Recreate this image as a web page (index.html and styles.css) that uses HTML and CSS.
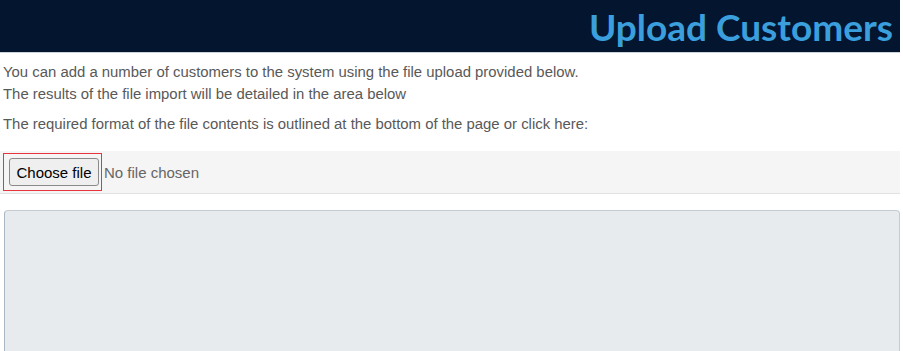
FILE: index.html
```
<!DOCTYPE html>

<html>
	<head>
		<meta charset="utf-8">
		<title>Upload Customers</title>
		<link rel="stylesheet" href="styles.css">
	</head>

	<body>
		<div class = "header">
			<h1>Upload Customers</h1>
		</div>

		<div class = "intro">
			<p>You can add a number of customers to the system using the file upload provided below.<br>
			The results of the file import will be detailed in the area below</p>
			<p class = "format">The required format of the file contents is outlined at the bottom of the page or click here:</p>
		</div>

		<!--File picker-->
		<div class = "uploadBar">
			<label class = "picker">
				<input type = "file" class = "fileInput">
				<span class = "chooseButton">Choose file</span>
			</label>
			<span class = "fileName">No file chosen</span>
		</div>

		<!--Import results-->
		<div class = "results">
			<textarea class = "resultText" readonly></textarea>
		</div>
	</body>
</html>
```

FILE: styles.css
```
html {
	overflow: hidden;
}

body {
	margin: 0 3px 0 0;
	font-family: 'Liberation Sans', Arial, sans-serif;
	background-color: #ffffff;
}

/*Header*/
.header {
	height: 52px;
	background-color: #03152f;
	border-bottom: 1px solid #cdd2d8;
	display: flex;
	align-items: center;
	justify-content: flex-end;
	padding-right: 7px;
}

.header h1 {
	margin: 0;
	font-family: 'Lato', sans-serif;
	font-weight: 700;
	font-size: 37px;
	color: #3a9fdc;
}

/*Text at top*/
.intro {
	padding: 0 3px;
	color: #595959;
	font-size: 14.9px;
	line-height: 22px;
}

.intro p {
	margin: 8px 0 0 0;
}

.intro .format {
	margin-bottom: 16px;
}

/*Upload bar*/
.uploadBar {
	display: flex;
	align-items: center;
	height: 40px;
	padding: 1px 3px 1px 3px;
	background-color: #f5f5f5;
	border-bottom: 1px solid #e2e2e2;
}

.picker {
	display: block;
	border: 1px solid #e8343c;
	padding: 4px 2px 4px 5px;
}

.fileInput {
	display: none;
}

.chooseButton {
	display: flex;
	align-items: center;
	justify-content: center;
	box-sizing: border-box;
	width: 90px;
	height: 28px;
	font-size: 15px;
	color: #000000;
	background-color: #efefef;
	border: 1px solid #8a8a8a;
	border-radius: 3px;
}

.fileName {
	margin-left: 2px;
	font-size: 15px;
	color: #666666;
}

/*Results area*/
.results {
	padding: 16px 0 0 4px;
}

.resultText {
	display: block;
	box-sizing: border-box;
	width: 100%;
	height: 200px;
	margin: 0;
	background-color: #e7ebee;
	border: 1px solid #c4cbd2;
	border-left-color: #a9b7c5;
	border-radius: 4px;
	resize: none;
}
```
